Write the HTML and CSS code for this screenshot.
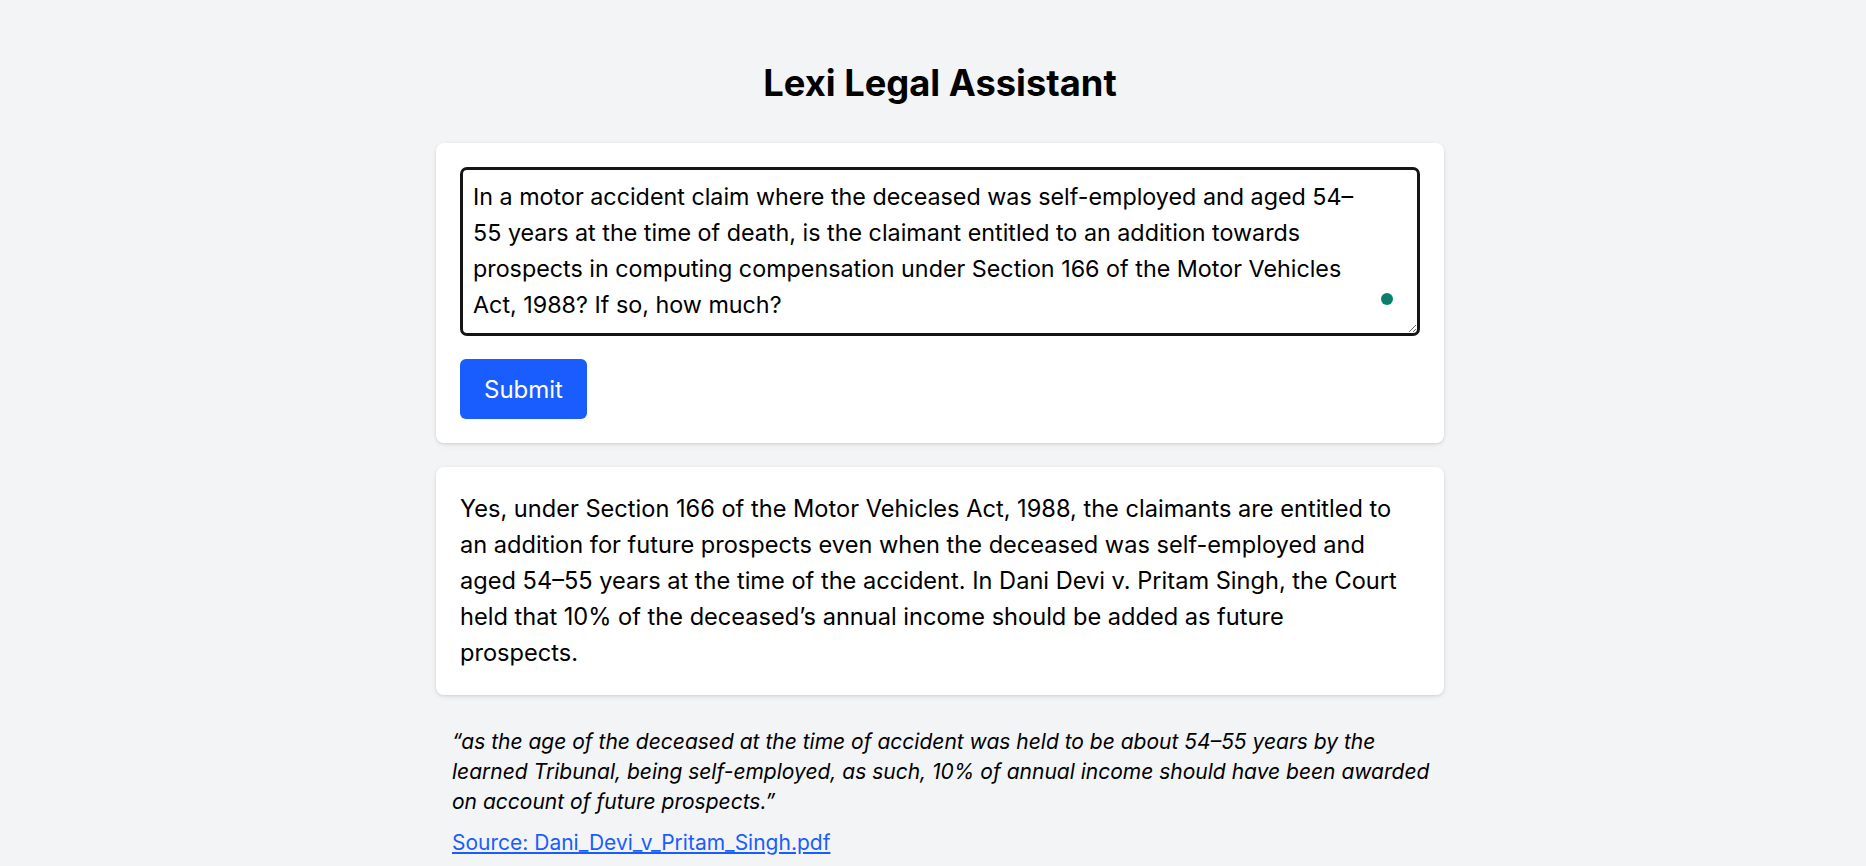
FILE: index.html
```html
<!DOCTYPE html>
<html lang="en">
<head>
<meta charset="utf-8">
<title>Lexi Legal Assistant</title>
<link rel="stylesheet" href="styles.css">
</head>
<body>
<div class="page">
  <main class="container">
    <h1 class="title">Lexi Legal Assistant</h1>
    <section class="card query-card">
      <div class="input-wrap">
        <textarea class="query-input">In a motor accident claim where the deceased was self-employed and aged 54–
55 years at the time of death, is the claimant entitled to an addition towards
prospects in computing compensation under Section 166 of the Motor Vehicles
Act, 1988? If so, how much?</textarea>
        <span class="status-dot"></span>
      </div>
      <button class="submit-btn" type="button">Submit</button>
    </section>
    <section class="card answer-card">
      <p class="answer">Yes, under Section 166 of the Motor Vehicles Act, 1988, the claimants are entitled to an addition for future prospects even when the deceased was self-employed and aged 54–55 years at the time of the accident. In Dani Devi v. Pritam Singh, the Court held that 10% of the deceased’s annual income should be added as future<br>prospects.</p>
    </section>
    <section class="citation">
      <p class="quote">“as the age of the deceased at the time of accident was held to be about 54–55 years by the<br>learned Tribunal, being self-employed, as such, 10% of annual income should have been awarded<br>on account of future prospects.”</p>
      <a class="source" href="#">Source: Dani_Devi_v_Pritam_Singh.pdf</a>
    </section>
  </main>
</div>
</body>
</html>
```

FILE: styles.css
```css
* { box-sizing: border-box; }
html, body {
  margin: 0;
  padding: 0;
  background: #f3f4f6;
  font-family: Inter, "Noto Sans", sans-serif;
  color: #000;
}
.page {
  padding: 0 0 0 14px;
}
.container {
  width: 1008px;
  margin: 0 auto;
  padding-top: 63px;
  display: flex;
  flex-direction: column;
}
.title {
  margin: 0 0 40px;
  text-align: center;
  font-size: 36.3px;
  line-height: 40px;
  font-weight: 700;
}
.card {
  background: #fff;
  border-radius: 8px;
  box-shadow: 0 1px 3px rgba(0,0,0,0.10), 0 2px 6px rgba(0,0,0,0.06);
  padding: 24px;
}
.query-card {
  display: flex;
  flex-direction: column;
  align-items: flex-start;
  gap: 23px;
}
.input-wrap {
  position: relative;
  width: 100%;
}
.query-input {
  display: block;
  width: 100%;
  height: 169px;
  border: 3px solid #151515;
  border-radius: 7px;
  padding: 9px 5px 9px 10px;
  font-family: Inter, "Noto Sans", sans-serif;
  font-size: 23.3px;
  line-height: 36px;
  color: #000;
  resize: vertical;
  outline: none;
}
.status-dot {
  position: absolute;
  right: 27px;
  top: 126px;
  width: 12px;
  height: 12px;
  border-radius: 50%;
  background: #0b7f6e;
}
.submit-btn {
  height: 60px;
  padding: 0 24px;
  background: #1a5dff;
  color: #fff;
  border: none;
  border-radius: 6px;
  font-family: Inter, "Noto Sans", sans-serif;
  font-size: 24px;
}
.answer-card {
  margin-top: 24px;
}
.answer {
  margin: 0;
  font-size: 23.6px;
  line-height: 36px;
}
.citation {
  padding: 32px 0 0 16px;
}
.quote {
  margin: 0;
  font-style: italic;
  font-size: 21px;
  line-height: 30px;
}
.source {
  display: inline-block;
  margin-top: 11px;
  font-size: 21px;
  line-height: 30px;
  color: #1a5dff;
  text-decoration: underline;
}
```
